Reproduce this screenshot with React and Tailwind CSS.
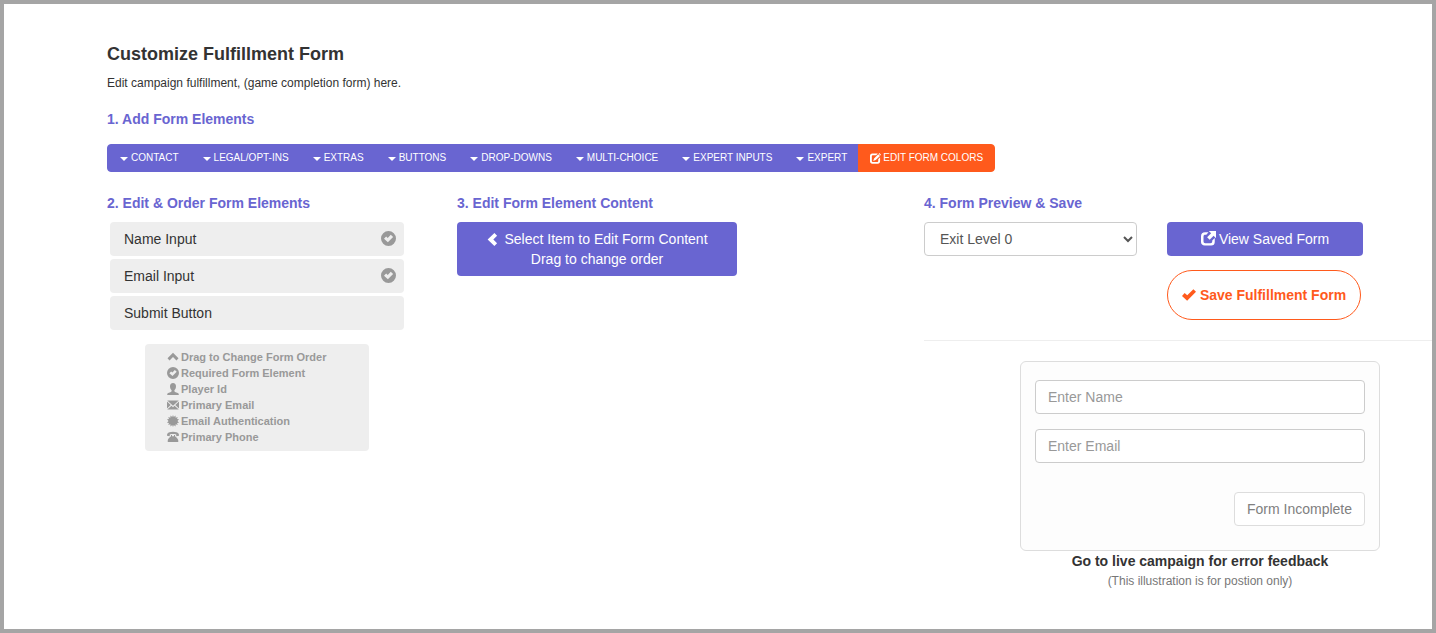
import { useState } from 'react'

const menus = [
  'CONTACT',
  'LEGAL/OPT-INS',
  'EXTRAS',
  'BUTTONS',
  'DROP-DOWNS',
  'MULTI-CHOICE',
  'EXPERT INPUTS',
  'EXPERT',
]

const formElements = [
  { name: 'Name Input', required: true },
  { name: 'Email Input', required: true },
  { name: 'Submit Button', required: false },
]

const legend = [
  { icon: ChevronUpIcon, label: 'Drag to Change Form Order' },
  { icon: OkCircleIcon, label: 'Required Form Element' },
  { icon: UserIcon, label: 'Player Id' },
  { icon: EnvelopeIcon, label: 'Primary Email' },
  { icon: CertificateIcon, label: 'Email Authentication' },
  { icon: PhoneIcon, label: 'Primary Phone' },
]

function Icon({ className, children }) {
  return (
    <svg className={className} viewBox="0 0 24 24" fill="currentColor" aria-hidden="true">
      {children}
    </svg>
  )
}

function ChevronUpIcon({ className }) {
  return (
    <Icon className={className}>
      <path d="M12 3.500 23 14.500l-4 4.500-7-7-7 7-4-4.500z" />
    </Icon>
  )
}

function ChevronLeftIcon({ className }) {
  return (
    <Icon className={className}>
      <path d="M15.500 0 20.500 5 13.500 12l7 7-5 5L3 12z" />
    </Icon>
  )
}

function OkCircleIcon({ className }) {
  return (
    <Icon className={className}>
      <path
        fillRule="evenodd"
        d="M12 0a12 12 0 1 0 0 24 12 12 0 0 0 0-24zM15.600 5.800l3.800 3.800-8.400 8.400-6.200-5.600 3.400-3.600 2.600 2.200z"
      />
    </Icon>
  )
}

function OkIcon({ className }) {
  return (
    <Icon className={className}>
      <path d="M19.500 2 24 6.500 8.800 21.800 0 13.500 4.500 8.500l4.500 4z" />
    </Icon>
  )
}

function UserIcon({ className }) {
  return (
    <Icon className={className}>
      <path d="M12 0c3.800 0 6 2.600 6 6.500 0 3.500-1.500 6.500-3.200 8v1.700c0 .9.500 1.300 1.300 1.600l5.400 2c1.200.5 2 1.200 2 2.400V24H.5v-1.800c0-1.200.8-1.900 2-2.400l5.400-2c.8-.3 1.300-.7 1.300-1.600v-1.700C7.500 13 6 10 6 6.500 6 2.600 8.200 0 12 0z" />
    </Icon>
  )
}

function EnvelopeIcon({ className }) {
  return (
    <Icon className={className}>
      <path d="M.5 3h23L12 13.500zM0 5l7.500 7L0 19zM24 5v14l-7.500-7zM9 13.500l3 2.800 3-2.800 8.500 7.500H.5z" />
    </Icon>
  )
}

function CertificateIcon({ className }) {
  return (
    <Icon className={className}>
      <path d="M12 0l1.700 4.200L17 1l.3 4.500L21.500 4l-1.500 4.200L24 8.500 21 12l3 3.500-4 .3 1.500 4.200-4.200-1.500L17 23l-3.300-3.200L12 24l-1.700-4.200L7 23l-.3-4.500L2.500 20 4 15.800l-4-.3L3 12 0 8.500l4-.3L2.500 4l4.200 1.500L7 1l3.300 3.200z" />
    </Icon>
  )
}

function PhoneIcon({ className }) {
  return (
    <Icon className={className}>
      <path d="M12 1.500c5.500 0 9.500 1.500 11 3.500.9 1.200 1 3 1 4.500l-5.500 1V7c-2-.7-4-.9-6.500-.9S7.500 6.300 5.500 7v3.500L0 9.500C0 8 .1 6.200 1 5c1.500-2 5.500-3.500 11-3.500z" />
      <path d="M8 8h2v2.500h4V8h2v2.500c2 1.500 6.500 5.500 6.500 8V22h-21v-3.500c0-2.500 4.500-6.500 6.500-8z" />
    </Icon>
  )
}

function EditIcon({ className }) {
  return (
    <Icon className={className}>
      <path d="M5 1h12l-3.500 4H6C4.800 5 4 5.800 4 7v10.500c0 1.200.8 2 2 2h10c1.200 0 2-.8 2-2V13.500l4-4V18c0 3.200-2 5.200-5 5.200H5c-3 0-5-2-5-5.200V6.200C0 3 2 1 5 1z" />
      <path d="M18 2.500 21.800 6.300 12.500 15.500 7 17.500 8.800 11.800zM19 1.500 20.500 0 24 3.800l-1.300 1.500z" />
    </Icon>
  )
}

function ShareIcon({ className }) {
  return (
    <Icon className={className}>
      <path d="M6.500 2H12L8.500 6H7C5 6 4 7 4 9v7.500c0 2 1 3 3 3h8c2 0 3-1 3-3V15l4-4v6.500c0 3.600-2.200 5.700-5.700 5.700H6c-3.600 0-6-2.200-6-5.700V8.500C0 4.500 2.500 2 6.500 2z" />
      <path d="M12.500 0H24v11.500l-3.800-3.800-6.400 6.400-4-4 6.400-6.400z" />
    </Icon>
  )
}

function StepTitle({ children }) {
  return <h2 className="text-sm leading-4 font-bold text-[#6965d1]">{children}</h2>
}

export default function App() {
  const [level, setLevel] = useState('0')

  return (
    <div className="min-h-screen border-4 border-[#a5a5a5] bg-white pt-10 pb-9 pl-[103px] font-['Liberation_Sans',Arial,sans-serif] text-sm leading-5 text-[#333]">
      <header>
        <h1 className="text-lg leading-5 font-bold">Customize Fulfillment Form</h1>
        <p className="mt-[11px] text-xs leading-4">
          Edit campaign fulfillment, (game completion form) here.
        </p>
      </header>

      <section className="mt-5">
        <StepTitle>1. Add Form Elements</StepTitle>
        <div className="mt-[17px] flex text-[10px] leading-4 text-white">
          {menus.map((menu) => (
            <button
              key={menu}
              type="button"
              className="-ml-px flex h-7 items-center gap-[3px] border border-[#6965d1] bg-[#6965d1] pr-[11px] pl-3 whitespace-nowrap first:ml-0 first:rounded-l"
            >
              <svg className="mt-0.5 h-1 w-2" viewBox="0 0 8 4" fill="currentColor" aria-hidden="true">
                <path d="M0 0h8L4 4z" />
              </svg>
              {menu}
            </button>
          ))}
          <button
            type="button"
            className="-ml-px flex h-7 items-center gap-0.5 rounded-r border border-[#ff5a1c] bg-[#ff5a1c] px-[11px] whitespace-nowrap"
          >
            <EditIcon className="size-[11px]" />
            EDIT FORM COLORS
          </button>
        </div>
      </section>

      <main className="mt-[23px] grid grid-cols-[350fr_467fr_508fr]">
        {/* Order list */}
        <section>
          <StepTitle>2. Edit &amp; Order Form Elements</StepTitle>
          <ul className="mt-[11px] mr-[53px] ml-[3px] space-y-[3px]">
            {formElements.map((element) => (
              <li
                key={element.name}
                className="flex h-[34px] items-center justify-between rounded bg-[#eee] pr-2 pl-[14px]"
              >
                {element.name}
                {element.required && <OkCircleIcon className="mb-0.5 size-[15px] text-[#999]" />}
              </li>
            ))}
          </ul>
          <ul className="mt-[14px] mr-[88px] ml-[38px] rounded bg-[#eee] pt-[5px] pb-1.5 pl-[22px] text-[11px] leading-4 font-bold text-[#999]">
            {legend.map(({ icon: LegendIcon, label }) => (
              <li key={label} className="flex items-center gap-0.5">
                <LegendIcon className="size-3" />
                {label}
              </li>
            ))}
          </ul>
        </section>

        {/* Element content */}
        <section>
          <StepTitle>3. Edit Form Element Content</StepTitle>
          <button
            type="button"
            className="mt-[11px] w-[280px] rounded bg-[#6965d1] py-[7px] text-center text-white"
          >
            <span className="flex items-center justify-center gap-[5px]">
              <ChevronLeftIcon className="size-[13px]" />
              Select Item to Edit Form Content
            </span>
            Drag to change order
          </button>
        </section>

        {/* Preview */}
        <section>
          <StepTitle>4. Form Preview &amp; Save</StepTitle>
          <div className="mt-[11px] flex items-start gap-[30px]">
            <select
              aria-label="Exit level"
              value={level}
              onChange={(e) => setLevel(e.target.value)}
              className="h-[34px] w-[213px] rounded border border-[#ccc] bg-white pr-3 pl-[11px] text-[#555]"
            >
              <option value="0">Exit Level 0</option>
              <option value="1">Exit Level 1</option>
              <option value="2">Exit Level 2</option>
            </select>
            <div className="w-[196px]">
              <button
                type="button"
                className="flex h-[34px] w-full items-center justify-center gap-[3px] rounded bg-[#6965d1] text-white"
              >
                <ShareIcon className="mb-0.5 size-[15px]" />
                View Saved Form
              </button>
              <button
                type="button"
                className="mt-[14px] flex h-[50px] w-[194px] items-center justify-center gap-1 rounded-full border border-[#ff5a1c] font-bold whitespace-nowrap text-[#ff5a1c]"
              >
                <OkIcon className="size-[14px]" />
                Save Fulfillment Form
              </button>
            </div>
          </div>

          <hr className="mt-5 border-[#eee]" />

          <div className="mt-5 mr-[52px] ml-24">
            <form className="rounded-md border border-[#ddd] bg-[#fdfdfd] px-[14px] pt-[18px] pb-6">
              <input
                type="text"
                aria-label="Name"
                placeholder="Enter Name"
                className="block h-[34px] w-full rounded border border-[#ccc] bg-white px-3 placeholder:text-[#999]"
              />
              <input
                type="email"
                aria-label="Email"
                placeholder="Enter Email"
                className="mt-[15px] block h-[34px] w-full rounded border border-[#ccc] bg-white px-3 placeholder:text-[#999]"
              />
              <div className="mt-[29px] flex justify-end">
                <button
                  type="button"
                  className="h-[34px] rounded border border-[#ddd] bg-white px-3 text-[#808080]"
                >
                  Form Incomplete
                </button>
              </div>
            </form>
            <p className="text-center font-bold">Go to live campaign for error feedback</p>
            <p className="text-center text-xs leading-5 text-[#777]">
              (This illustration is for postion only)
            </p>
          </div>
        </section>
      </main>
    </div>
  )
}
